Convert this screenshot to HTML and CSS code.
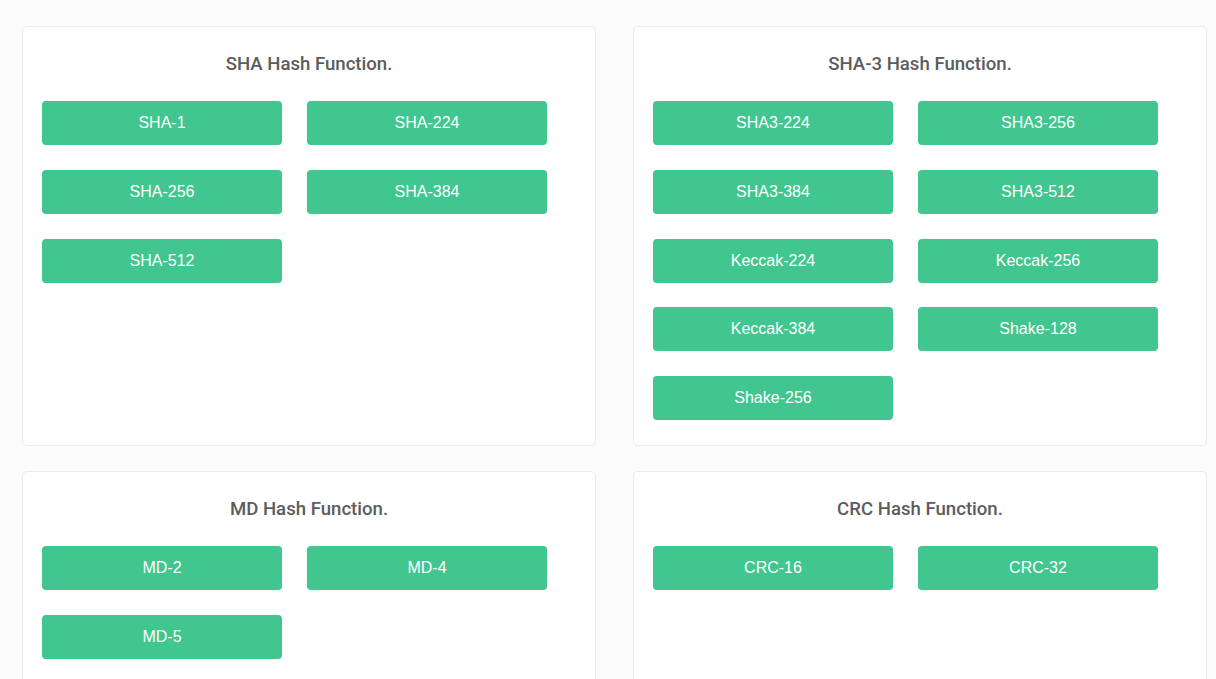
FILE: index.html
```html
<!DOCTYPE html>
<html>
<head>
<meta charset="utf-8">
<link rel="stylesheet" href="styles.css">
</head>
<body>
<div class="grid">
  <section class="card">
    <h2 class="title">SHA Hash Function.</h2>
    <div class="btns">
      <a class="btn">SHA-1</a>
      <a class="btn">SHA-224</a>
      <a class="btn">SHA-256</a>
      <a class="btn">SHA-384</a>
      <a class="btn">SHA-512</a>
    </div>
  </section>
  <section class="card">
    <h2 class="title">SHA-3 Hash Function.</h2>
    <div class="btns">
      <a class="btn">SHA3-224</a>
      <a class="btn">SHA3-256</a>
      <a class="btn">SHA3-384</a>
      <a class="btn">SHA3-512</a>
      <a class="btn">Keccak-224</a>
      <a class="btn">Keccak-256</a>
      <a class="btn">Keccak-384</a>
      <a class="btn">Shake-128</a>
      <a class="btn">Shake-256</a>
    </div>
  </section>
  <section class="card">
    <h2 class="title">MD Hash Function.</h2>
    <div class="btns">
      <a class="btn">MD-2</a>
      <a class="btn">MD-4</a>
      <a class="btn">MD-5</a>
    </div>
  </section>
  <section class="card">
    <h2 class="title">CRC Hash Function.</h2>
    <div class="btns">
      <a class="btn">CRC-16</a>
      <a class="btn">CRC-32</a>
    </div>
  </section>
</div>
</body>
</html>
```
FILE: styles.css
```css
html, body {
  margin: 0;
  padding: 0;
  background: #fcfcfc;
}
body {
  font-family: "Liberation Sans", Arial, sans-serif;
}
.grid {
  display: grid;
  grid-template-columns: 574px 574px;
  column-gap: 37px;
  row-gap: 25px;
  padding: 26px 0 0 22px;
}
.card {
  background: #fff;
  border: 1px solid #ebebeb;
  border-radius: 5px;
  padding: 0 19px 0 19px;
  min-height: 393px;
  box-sizing: border-box;
}
.title {
  margin: 0;
  padding-top: 26px;
  height: 49px;
  box-sizing: border-box;
  font-family: Roboto, "Liberation Sans", sans-serif;
  font-weight: 500;
  font-size: 18.6px;
  line-height: 22px;
  color: #5c5c5c;
  text-align: center;
}
.btns {
  display: grid;
  grid-template-columns: 240px 240px;
  column-gap: 25px;
  row-gap: 24.75px;
  padding-top: 25px;
  padding-bottom: 25px;
}
.btn {
  display: flex;
  align-items: center;
  justify-content: center;
  height: 44px;
  background: #40c68e;
  color: #fff;
  border-radius: 4px;
  font-size: 16px;
}
```
